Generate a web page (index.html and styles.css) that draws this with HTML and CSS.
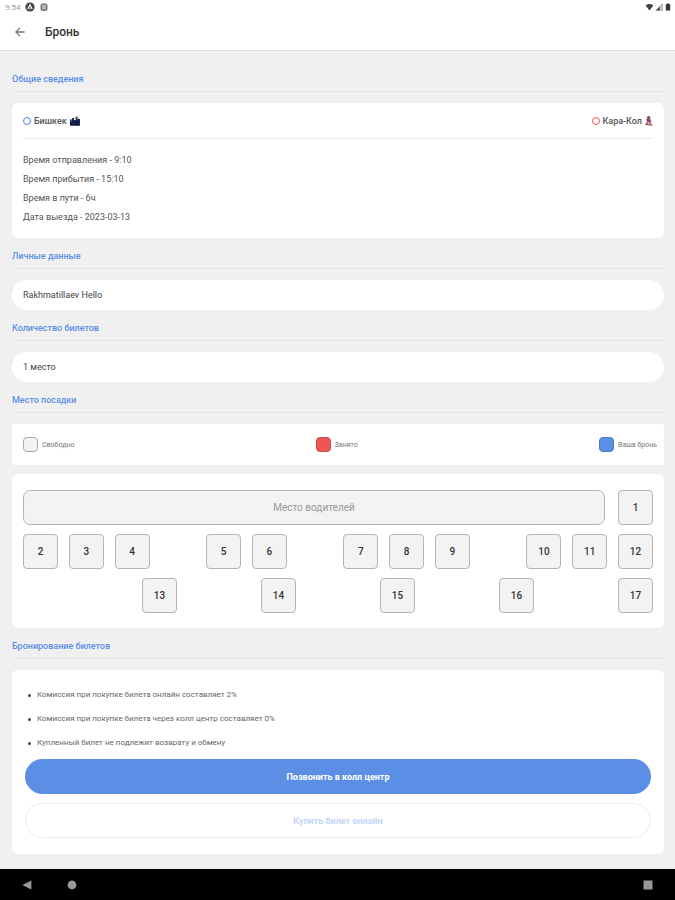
FILE: index.html
```html
<!DOCTYPE html>
<html lang="ru">
<head>
  <meta charset="UTF-8" />
  <meta name="viewport" content="width=device-width, initial-scale=1.0" />
  <title>Бронь</title>
  <link rel="stylesheet" href="styles.css">
</head>
<body>
  <div class="status-bar">
    <span class="status-time">9:54</span>
    <svg width="10" height="10" viewBox="0 0 10 10"><circle cx="5" cy="5" r="4.6" fill="#444"/><path d="M2.8 7 5 2.8 7.2 7M5 5.4v1.8" fill="none" stroke="#fff" stroke-width="1.1"/></svg>
    <svg width="8" height="8" viewBox="0 0 8 8"><rect x="1" y="1" width="6" height="6.4" rx="1.4" fill="#999" stroke="#666"/><path d="M2.5 3h3M2.5 5h3" stroke="#eee" stroke-width=".8"/></svg>
    <div class="status-icons">
      <svg width="9" height="8" viewBox="0 0 9 8"><path d="M.6 2.4C2.8.4 6.2.4 8.4 2.4L4.5 7.4z" fill="#444"/></svg>
      <svg width="8" height="8" viewBox="0 0 8 8"><path d="M7.4.8v6.6H.8z" fill="#ccc"/><path d="M4.8 3.4v4h-4z" fill="#444"/><path d="M7.4.8v6.6H.8z" fill="none" stroke="#888" stroke-width=".6"/></svg>
      <svg width="8" height="8" viewBox="0 0 8 8"><path d="M3 .4h2v.8h1.2v6.4H1.8V1.2H3z" fill="#333"/></svg>
    </div>
  </div>

  <header class="app-bar">
    <button class="back-btn" aria-label="Назад">
      <svg width="10" height="10" viewBox="0 0 10 10"><path d="M9.6 5H1.2M5 .9.9 5 5 9.1" fill="none" stroke="#777" stroke-width="1.3"/></svg>
    </button>
    <h1>Бронь</h1>
  </header>

  <main>
    <h2>Общие сведения</h2>
    <section class="card trip">
      <div class="route">
        <div class="city">
          <span class="dot dot-from"></span>
          <span>Бишкек</span>
          <svg width="10" height="10" viewBox="0 0 10 10"><path d="M0 9.6V3.4h2V2h2v2h1.6V.8h2V3H10v6.6z" fill="#142c66"/><path d="M0 9.6V6h2.4V5h2v1.4h2V4.6h1.8V6H10v3.6z" fill="#0a1740"/><path d="M4.2 1.8h1.2M8.2 2.2h1.2" stroke="#f0d264" stroke-width="1.2"/><path d="M1 4.8h.8M6.2 3h.8M3 7.4h.8M8.4 7.4h.8" stroke="#d9b34c" stroke-width=".7"/></svg>
        </div>
        <div class="city">
          <span class="dot dot-to"></span>
          <span>Кара-Кол</span>
          <svg width="8" height="10" viewBox="0 0 8 10"><circle cx="3.6" cy="1.8" r="1.7" fill="#8a4d37"/><path d="M1.4 3h4l1.4 2.6H5.4L6.4 8H4.6L3.4 6.4 2.4 8H.6L2 5.4z" fill="#c05672"/><path d="M1.6 3.6 5.2 5.4" stroke="#5c4a9c" stroke-width="1.2"/><path d="M.4 8.4 7.4 9.2" stroke="#8b5b3e" stroke-width="1.3"/></svg>
        </div>
      </div>
      <div class="trip-info">
        <p>Время отправления - 9:10</p>
        <p>Время прибытия - 15:10</p>
        <p>Время в пути - 6ч</p>
        <p>Дата выезда - 2023-03-13</p>
      </div>
    </section>

    <h2><label for="passenger">Личные данные</label></h2>
    <input class="field" type="text" id="passenger" value="Rakhmatillaev Hello" />

    <h2><label for="count">Количество билетов</label></h2>
    <select class="field" id="count">
      <option>1 место</option>
      <option>2 места</option>
      <option>3 места</option>
    </select>

    <h2>Место посадки</h2>
    <section class="card legend">
      <div class="legend-item"><span class="swatch"></span>Свободно</div>
      <div class="legend-item"><span class="swatch swatch-taken"></span>Занято</div>
      <div class="legend-item"><span class="swatch swatch-mine"></span>Ваша бронь</div>
    </section>

    <section class="card seats">
      <div class="seat-row">
        <div class="driver">Место водителей</div>
        <button class="seat">1</button>
      </div>
      <div class="seat-row">
        <button class="seat">2</button>
        <button class="seat">3</button>
        <button class="seat">4</button>
        <span class="aisle"></span>
        <button class="seat">5</button>
        <button class="seat">6</button>
        <span class="aisle"></span>
        <button class="seat">7</button>
        <button class="seat">8</button>
        <button class="seat">9</button>
        <span class="aisle"></span>
        <button class="seat">10</button>
        <button class="seat">11</button>
        <button class="seat">12</button>
      </div>
      <div class="seat-row">
        <span class="aisle"></span>
        <button class="seat">13</button>
        <button class="seat">14</button>
        <button class="seat">15</button>
        <button class="seat">16</button>
        <button class="seat">17</button>
      </div>
    </section>

    <h2>Бронирование билетов</h2>
    <section class="card booking">
      <ul>
        <li>Комиссия при покупке билета онлайн составляет 2%</li>
        <li>Комиссия при покупке билета через колл центр составляет 0%</li>
        <li>Купленный билет не подлежит возврату и обмену</li>
      </ul>
      <button class="btn btn-call">Позвонить в колл центр</button>
      <button class="btn btn-buy" disabled>Купить билет онлайн</button>
    </section>
  </main>

  <nav class="nav-bar">
    <button aria-label="Назад"><svg width="10" height="10" viewBox="0 0 10 10"><path d="M9.4.4v9.2L.4 5z" fill="#999"/></svg></button>
    <button aria-label="Домой"><svg width="10" height="10" viewBox="0 0 10 10"><circle cx="5" cy="5" r="4.4" fill="#999"/></svg></button>
    <button class="nav-recent" aria-label="Недавние"><svg width="10" height="10" viewBox="0 0 10 10"><rect x=".5" y=".5" width="9" height="9" fill="#999"/></svg></button>
  </nav>
</body>
</html>
```
FILE: styles.css
```css
* {
  box-sizing: border-box;
}

body {
  font-family: Roboto, "Liberation Sans", sans-serif;
  font-size: 9px;
  background-color: #f0f0f0;
  color: #555;
  margin: 0;
  min-height: 100vh;
  display: flex;
  flex-direction: column;
}

button {
  font-family: inherit;
  border: none;
  background: none;
  padding: 0;
  cursor: pointer;
}

svg {
  display: block;
}

.status-bar {
  display: flex;
  align-items: center;
  gap: 5px;
  height: 14px;
  padding: 0 3px 0 5px;
  background-color: #fff;
}

.status-time {
  font-size: 8px;
  color: #999;
}

.status-icons {
  display: flex;
  gap: 1px;
  margin-left: auto;
}

.app-bar {
  display: flex;
  align-items: center;
  gap: 20px;
  height: 36px;
  padding: 0 15px;
  background-color: #fff;
  box-shadow: 0 1px 1px rgba(0, 0, 0, 0.08);
}

.back-btn {
  display: block;
}

h1 {
  margin: 0;
  font-size: 12px;
  font-weight: 500;
  line-height: 16px;
  color: #333;
}

main {
  flex: 1;
  padding: 11px 11px 15px 12px;
}

h2 {
  margin: 0 0 11px;
  padding: 10px 0 4px;
  font-size: 9px;
  font-weight: 500;
  line-height: 16px;
  color: #5b8fe6;
  border-bottom: 1px solid #e4e4e4;
}

.card {
  background-color: #fff;
  border-radius: 6px;
}

.trip {
  padding: 10px 11px 11px;
}

.route {
  display: flex;
  justify-content: space-between;
  padding-bottom: 9px;
  border-bottom: 1px solid #ececec;
  font-weight: 500;
  line-height: 16px;
}

.city {
  display: flex;
  align-items: center;
  gap: 3px;
}

.dot {
  width: 8px;
  height: 8px;
  border: 1px solid;
  border-radius: 50%;
}

.dot-from {
  border-color: #4a82e8;
}

.dot-to {
  border-color: #f0525f;
}

.trip-info {
  margin-top: 12px;
}

.trip-info p {
  margin: 0;
  line-height: 19px;
}

.field {
  display: block;
  width: 100%;
  height: 30px;
  padding: 0 11px;
  border: none;
  border-radius: 15px;
  background-color: #fff;
  color: #444;
  font-family: inherit;
  font-size: 9px;
  appearance: none;
}

.legend {
  display: flex;
  justify-content: space-between;
  align-items: center;
  height: 41px;
  padding: 0 7px 0 11px;
  margin-bottom: 9px;
  border-radius: 3px;
}

.legend-item {
  display: flex;
  align-items: center;
  gap: 4px;
  font-size: 7px;
  color: #777;
}

.swatch {
  width: 15px;
  height: 15px;
  border: 1px solid #aaa;
  border-radius: 4px;
  background-color: #f3f3f3;
}

.swatch-taken {
  background-color: #ef5552;
  border-color: #c74e4e;
}

.swatch-mine {
  background-color: #5b8fe6;
  border-color: #4b79c4;
}

.seats {
  display: flex;
  flex-direction: column;
  gap: 9px;
  padding: 16px 11px 15px;
}

.seat-row {
  display: flex;
  justify-content: space-between;
}

.driver {
  flex: 1;
  display: flex;
  align-items: center;
  justify-content: center;
  margin-right: 13px;
  border: 1px solid #b5b5b5;
  border-radius: 7px;
  background-color: #f3f3f3;
  font-size: 10px;
  color: #999;
}

.seat,
.aisle {
  width: 35px;
  height: 35px;
}

.seat {
  border: 1px solid #b5b5b5;
  border-radius: 4px;
  background-color: #f3f3f3;
  font-size: 10px;
  font-weight: 500;
  color: #333;
}

.booking {
  padding: 13px 13px 16px;
}

.booking ul {
  margin: 0 0 4px;
  padding-left: 12px;
  list-style: none;
  font-size: 8px;
  line-height: 24px;
  color: #666;
}

.booking li::before {
  content: "";
  float: left;
  width: 3px;
  height: 3px;
  margin: 11px 0 0 -9px;
  border-radius: 50%;
  background-color: #444;
}

.btn {
  display: block;
  width: 100%;
  height: 35px;
  border-radius: 18px;
  font-size: 9px;
  font-weight: 700;
}

.btn-call {
  margin-bottom: 9px;
  background-color: #5b8fe6;
  color: #fff;
}

.btn-buy {
  border: 1px solid #e6ecf8;
  color: #c5d6f5;
}

.nav-bar {
  display: flex;
  align-items: center;
  gap: 35px;
  height: 31px;
  padding: 0 22px;
  background-color: #000;
}

.nav-recent {
  margin-left: auto;
}
```
